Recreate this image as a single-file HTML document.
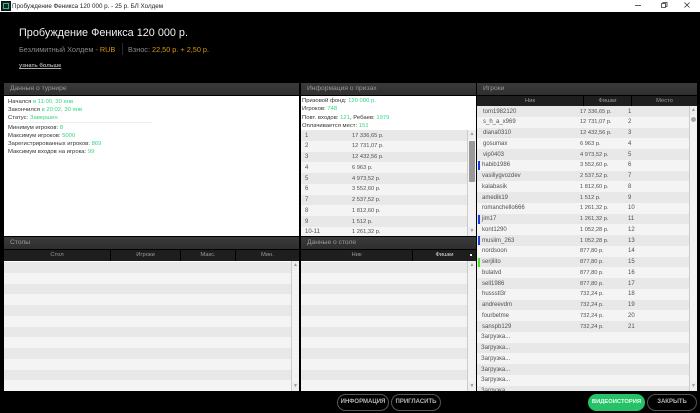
<!DOCTYPE html>
<html><head><meta charset="utf-8">
<style>
html,body{margin:0;padding:0;background:#000;}
body{width:700px;height:413px;overflow:hidden;position:relative;font-family:"Liberation Sans","Noto Sans CJK SC",sans-serif;}
#p{position:absolute;left:0;top:0;width:700px;height:413px;background:#000;overflow:hidden;filter:blur(.25px);}
.a{position:absolute;white-space:nowrap;}
.ph{position:absolute;height:12px;background:linear-gradient(#3a3a3a,#2e2e2e);color:#999;font-size:6.7px;line-height:12px;padding-left:6px;box-sizing:border-box;white-space:nowrap;}
.ch{position:absolute;height:11px;background:#1e1e1e;color:#999;font-size:5.8px;line-height:11px;text-align:center;border-right:1px solid #000;box-sizing:border-box;}
.w{position:absolute;background:#fff;}
.t{color:#333;font-size:5.9px;line-height:8px;}
.t b{font-weight:normal;color:#35d580;}
.rows{position:absolute;overflow:hidden;}
.r{position:relative;height:10.75px;font-size:6px;line-height:10.75px;color:#505050;white-space:nowrap;}
.r:nth-child(odd){background:#e8e8e8;}
.r:nth-child(even){background:#f4f4f4;}
.r span{position:absolute;top:.5px;}
.r span:nth-of-type(2){font-size:5.7px;}
.m{position:absolute;left:1px;top:1px;width:2px;height:9px;}
.sb{position:absolute;background:#f3f3f3;border-left:1px solid #ccc;box-sizing:border-box;}
.arr{position:absolute;left:0;right:0;height:9px;background:#eee;color:#999;font-size:5px;line-height:9px;text-align:center;}
.th{position:absolute;left:1px;right:1px;background:#999;border-radius:1px;}
.btn{position:absolute;height:17px;top:394px;border:1px solid #555;border-radius:9px;box-sizing:border-box;color:#b5b5b5;font-size:6px;font-weight:bold;line-height:15px;text-align:center;white-space:nowrap;}
</style></head><body><div id="p">

<!-- title bar -->
<div class="a" style="left:0;top:0;width:700px;height:12px;background:#fff;"></div>
<div class="a" style="left:1px;top:1px;width:10px;height:10px;background:#123;border:1px solid #111;box-sizing:border-box;"><div style="position:absolute;left:1px;top:1px;width:6px;height:6px;border:1px solid #2fbf71;box-sizing:border-box;"></div></div>
<div class="a" style="left:12px;top:0;font-size:6.25px;line-height:13px;color:#222;">Пробуждение Феникса 120 000 р. - 25 р. БЛ Холдем</div>
<svg class="a" style="left:630px;top:0" width="70" height="12" fill="none" stroke="#333" stroke-width="0.8"><path d="M5 5.500H11"/><path d="M31.500 3.500h4v4h-4zM33 3.500V2.500h4v4h-1.500"/><path d="M54.500 2.500l5 5M59.500 2.500l-5 5"/></svg>

<!-- heading -->
<div class="a" style="left:19px;top:25.500px;font-size:10.85px;line-height:14px;color:#f0f0f0;">Пробуждение Феникса 120 000 р.</div>
<div class="a" style="left:19px;top:45px;font-size:7.3px;line-height:10px;color:#8a8a8a;">Безлимитный Холдем - <span style="color:#d4980c">RUB</span></div>
<div class="a" style="left:122px;top:43px;width:1px;height:12px;background:#2a2a2a;"></div>
<div class="a" style="left:128px;top:45px;font-size:7.3px;line-height:10px;color:#8a8a8a;">Взнос: <span style="color:#d4980c">22,50 р. + 2,50 р.</span></div>
<div class="a" style="left:19px;top:62px;font-size:5.7px;line-height:9px;color:#aaa;text-decoration:underline;font-weight:bold;">узнать больше</div>

<!-- tournament panel -->
<div class="ph" style="left:4px;top:83px;width:295px;">Данные о турнире</div>
<div class="w" style="left:4px;top:96px;width:295px;height:140px;"></div>
<div class="a t" style="left:8px;top:98px;">Начался <b>в 11:00, 30 янв</b></div>
<div class="a t" style="left:8px;top:106px;">Закончился <b>в 20:02, 30 янв</b></div>
<div class="a t" style="left:8px;top:114px;">Статус: <b>Завершен</b></div>
<div class="a" style="left:8px;top:122px;width:144px;height:1px;background:#f0f0f0;"></div>
<div class="a t" style="left:8px;top:124px;">Минимум игроков: <b>8</b></div>
<div class="a t" style="left:8px;top:132px;">Максимум игроков: <b>5000</b></div>
<div class="a t" style="left:8px;top:140px;">Зарегистрированных игроков: <b>869</b></div>
<div class="a t" style="left:8px;top:148px;">Максимум входов на игрока: <b>99</b></div>

<!-- prize panel -->
<div class="ph" style="left:301px;top:83px;width:175px;">Информация о призах</div>
<div class="w" style="left:301px;top:96px;width:175px;height:140px;"></div>
<div class="a t" style="left:302px;top:97px;">Призовой фонд: <b>120 000 р.</b></div>
<div class="a t" style="left:302px;top:105px;">Игроков: <b>748</b></div>
<div class="a t" style="left:302px;top:114px;">Повт. входов: <b>121</b>, Ребаев: <b>1979</b></div>
<div class="a t" style="left:302px;top:122px;">Оплачивается мест: <b>151</b></div>
<div class="rows" style="left:301px;top:130px;width:166px;height:106px;">
<div class="r"><span style="left:4px">1</span><span style="left:51px">17 336,65 р.</span></div>
<div class="r"><span style="left:4px">2</span><span style="left:51px">12 731,07 р.</span></div>
<div class="r"><span style="left:4px">3</span><span style="left:51px">12 432,56 р.</span></div>
<div class="r"><span style="left:4px">4</span><span style="left:51px">6 963 р.</span></div>
<div class="r"><span style="left:4px">5</span><span style="left:51px">4 973,52 р.</span></div>
<div class="r"><span style="left:4px">6</span><span style="left:51px">3 552,60 р.</span></div>
<div class="r"><span style="left:4px">7</span><span style="left:51px">2 537,52 р.</span></div>
<div class="r"><span style="left:4px">8</span><span style="left:51px">1 812,60 р.</span></div>
<div class="r"><span style="left:4px">9</span><span style="left:51px">1 512 р.</span></div>
<div class="r"><span style="left:4px">10-11</span><span style="left:51px">1 261,32 р.</span></div>
</div>
<div class="sb" style="left:467px;top:130px;width:9px;height:106px;">
<div class="arr" style="top:0">▲</div><div class="th" style="top:11px;height:41px;"></div><div class="arr" style="bottom:0">▼</div></div>

<!-- tables panel -->
<div class="ph" style="left:4px;top:237px;width:295px;">Столы</div>
<div class="ch" style="left:4px;top:250px;width:107px;">Стол</div>
<div class="ch" style="left:111px;top:250px;width:70px;">Игроки</div>
<div class="ch" style="left:181px;top:250px;width:55px;">Макс.</div>
<div class="ch" style="left:236px;top:250px;width:63px;border-right:0;">Мин.</div>
<div class="w" style="left:4px;top:261px;width:287px;height:1px;"></div>
<div class="rows" style="left:4px;top:262px;width:287px;height:129px;background:#f4f4f4;">
<div class="r"></div><div class="r"></div><div class="r"></div><div class="r"></div><div class="r"></div><div class="r"></div><div class="r"></div><div class="r"></div><div class="r"></div><div class="r"></div><div class="r"></div><div class="r"></div><div class="r"></div>
</div>
<div class="sb" style="left:291px;top:261px;width:8px;height:130px;"><div class="arr" style="top:0">▲</div><div class="arr" style="bottom:0">▼</div></div>

<!-- table data panel -->
<div class="ph" style="left:301px;top:237px;width:175px;">Данные о столе</div>
<div class="ch" style="left:301px;top:250px;width:112px;">Ник</div>
<div class="ch" style="left:413px;top:250px;width:63px;border-right:0;color:#ddd;">Фишки</div>
<div class="a" style="left:470px;top:254px;width:2px;height:2px;background:#eee;"></div>
<div class="w" style="left:301px;top:261px;width:166px;height:1px;"></div>
<div class="rows" style="left:301px;top:262px;width:166px;height:129px;background:#f4f4f4;">
<div class="r"></div><div class="r"></div><div class="r"></div><div class="r"></div><div class="r"></div><div class="r"></div><div class="r"></div><div class="r"></div><div class="r"></div><div class="r"></div><div class="r"></div><div class="r"></div><div class="r"></div>
</div>
<div class="sb" style="left:467px;top:261px;width:9px;height:130px;"><div class="arr" style="top:0">▲</div><div class="arr" style="bottom:0">▼</div></div>

<!-- players panel -->
<div class="ph" style="left:477px;top:83px;width:220px;">Игроки</div>
<div class="ch" style="left:477px;top:96px;width:107px;">Ник</div>
<div class="ch" style="left:584px;top:96px;width:48px;">Фишки</div>
<div class="ch" style="left:632px;top:96px;width:65px;border-right:0;">Место</div>
<div class="rows" style="left:477px;top:106px;width:212px;height:285px;">
<div class="r"><span style="left:6px">tom1982120</span><span style="left:103px">17 336,65 р.</span><span style="left:151px">1</span></div>
<div class="r"><span style="left:6px">s_h_a_x969</span><span style="left:103px">12 731,07 р.</span><span style="left:151px">2</span></div>
<div class="r"><span style="left:6px">diana0310</span><span style="left:103px">12 432,56 р.</span><span style="left:151px">3</span></div>
<div class="r"><span style="left:6px">gosumax</span><span style="left:103px">6 963 р.</span><span style="left:151px">4</span></div>
<div class="r"><span style="left:6px">vip0403</span><span style="left:103px">4 973,52 р.</span><span style="left:151px">5</span></div>
<div class="r"><i class="m" style="background:#1b3fe0"></i><span style="left:5px">habib1986</span><span style="left:103px">3 552,60 р.</span><span style="left:151px">6</span></div>
<div class="r"><span style="left:5px">vasiliygvozdev</span><span style="left:103px">2 537,52 р.</span><span style="left:151px">7</span></div>
<div class="r"><span style="left:5px">kalabasik</span><span style="left:103px">1 812,60 р.</span><span style="left:151px">8</span></div>
<div class="r"><span style="left:5px">amedik19</span><span style="left:103px">1 512 р.</span><span style="left:151px">9</span></div>
<div class="r"><span style="left:5px">romanchello666</span><span style="left:103px">1 261,32 р.</span><span style="left:151px">10</span></div>
<div class="r"><i class="m" style="background:#1b3fe0"></i><span style="left:5px">jim17</span><span style="left:103px">1 261,32 р.</span><span style="left:151px">11</span></div>
<div class="r"><span style="left:5px">kont1290</span><span style="left:103px">1 052,28 р.</span><span style="left:151px">12</span></div>
<div class="r"><i class="m" style="background:#1b3fe0"></i><span style="left:5px">muslim_263</span><span style="left:103px">1 052,28 р.</span><span style="left:151px">13</span></div>
<div class="r"><span style="left:5px">nordsoon</span><span style="left:103px">877,80 р.</span><span style="left:151px">14</span></div>
<div class="r"><i class="m" style="background:#4fe02a"></i><span style="left:5px">serjilito</span><span style="left:103px">877,80 р.</span><span style="left:151px">15</span></div>
<div class="r"><span style="left:5px">bulatvd</span><span style="left:103px">877,80 р.</span><span style="left:151px">16</span></div>
<div class="r"><span style="left:5px">sell1986</span><span style="left:103px">877,80 р.</span><span style="left:151px">17</span></div>
<div class="r"><span style="left:5px">hussstl3r</span><span style="left:103px">732,24 р.</span><span style="left:151px">18</span></div>
<div class="r"><span style="left:5px">andreevdm</span><span style="left:103px">732,24 р.</span><span style="left:151px">19</span></div>
<div class="r"><span style="left:5px">fourbetme</span><span style="left:103px">732,24 р.</span><span style="left:151px">20</span></div>
<div class="r"><span style="left:5px">sanspb129</span><span style="left:103px">732,24 р.</span><span style="left:151px">21</span></div>
<div class="r"><span style="left:4px">Загрузка...</span></div>
<div class="r"><span style="left:4px">Загрузка...</span></div>
<div class="r"><span style="left:4px">Загрузка...</span></div>
<div class="r"><span style="left:4px">Загрузка...</span></div>
<div class="r"><span style="left:4px">Загрузка...</span></div>
<div class="r"><span style="left:4px">Загрузка...</span></div>
</div>
<div class="sb" style="left:689px;top:106px;width:8px;height:285px;"><div class="arr" style="top:0">▲</div><div class="a" style="left:1px;top:11px;width:5px;height:5px;border-radius:50%;background:#aaa;"></div><div class="arr" style="bottom:0">▼</div></div>

<!-- buttons -->
<div class="btn" style="left:337px;width:52px;">ИНФОРМАЦИЯ</div>
<div class="btn" style="left:391px;width:50px;">ПРИГЛАСИТЬ</div>
<div class="btn" style="left:588px;width:57px;background:#27c267;border-color:#27c267;color:#e8fff0;font-size:5.800px;">ВИДЕОИСТОРИЯ</div>
<div class="btn" style="left:647px;width:50px;">ЗАКРЫТЬ</div>

</div></body></html>
